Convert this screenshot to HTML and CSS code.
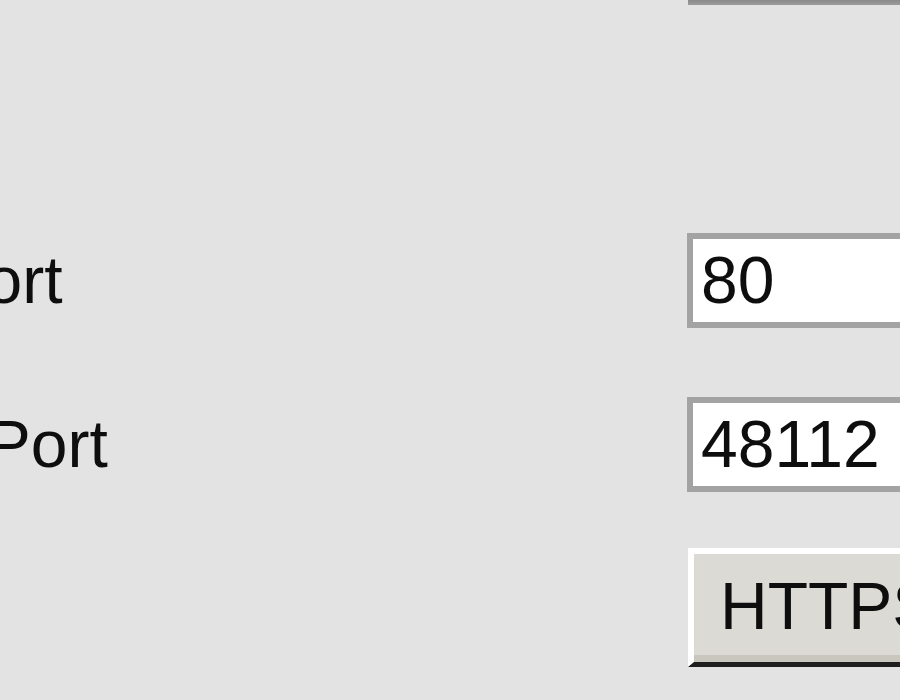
FILE: index.html
```html
<!DOCTYPE html>
<html lang="en">
<head>
<meta charset="utf-8">
<title>Ports</title>
<link rel="stylesheet" href="styles.css">
</head>
<body>
<div class="form">
  <div class="cell"></div>
  <div class="cell"><div class="prev-field"></div></div>

  <div class="label row1">HTTP Port</div>
  <div class="field row1">80</div>

  <div class="label row2">HTTPS Port</div>
  <div class="field row2">48112</div>

  <div class="cell"></div>
  <div class="cell"><div class="button">HTTPS Settings</div></div>
</div>
</body>
</html>
```
FILE: styles.css
```css
html, body {
  margin: 0;
  padding: 0;
  background: #e3e3e3;
  overflow: hidden;
  width: 900px;
  height: 700px;
}
body {
  font-family: "Liberation Sans", Arial, sans-serif;
  font-size: 66px;
  color: #0e0e0e;
}
.form {
  display: grid;
  grid-template-columns: 935px 500px;
  align-items: baseline;
  margin-left: -248px;
}
.cell {
  align-self: start;
}
.prev-field {
  height: 5px;
  margin-left: 1px;
  background: linear-gradient(#8a8a8a, #9c9c9c);
}
.label {
  line-height: normal;
  padding: 9px 0;
  white-space: nowrap;
}
.field {
  box-sizing: border-box;
  width: 420px;
  height: 95px;
  border: 6px solid #a3a3a3;
  background: #ffffff;
  padding: 3px 0 0 8px;
  line-height: normal;
  white-space: nowrap;
}
.row1 {
  margin-top: 228px;
}
.row2 {
  margin-top: 69px;
}
.button {
  margin-top: 56px;
  margin-left: 1px;
  box-sizing: border-box;
  width: 600px;
  height: 119px;
  border-top: 6px solid #ffffff;
  border-left: 6px solid #ffffff;
  border-bottom: 5px solid #1e1e1e;
  background: #dcdad5;
  box-shadow: inset 0 -7px 0 #c9c6bd;
  padding: 14px 0 0 26px;
  line-height: normal;
  white-space: nowrap;
}
```
